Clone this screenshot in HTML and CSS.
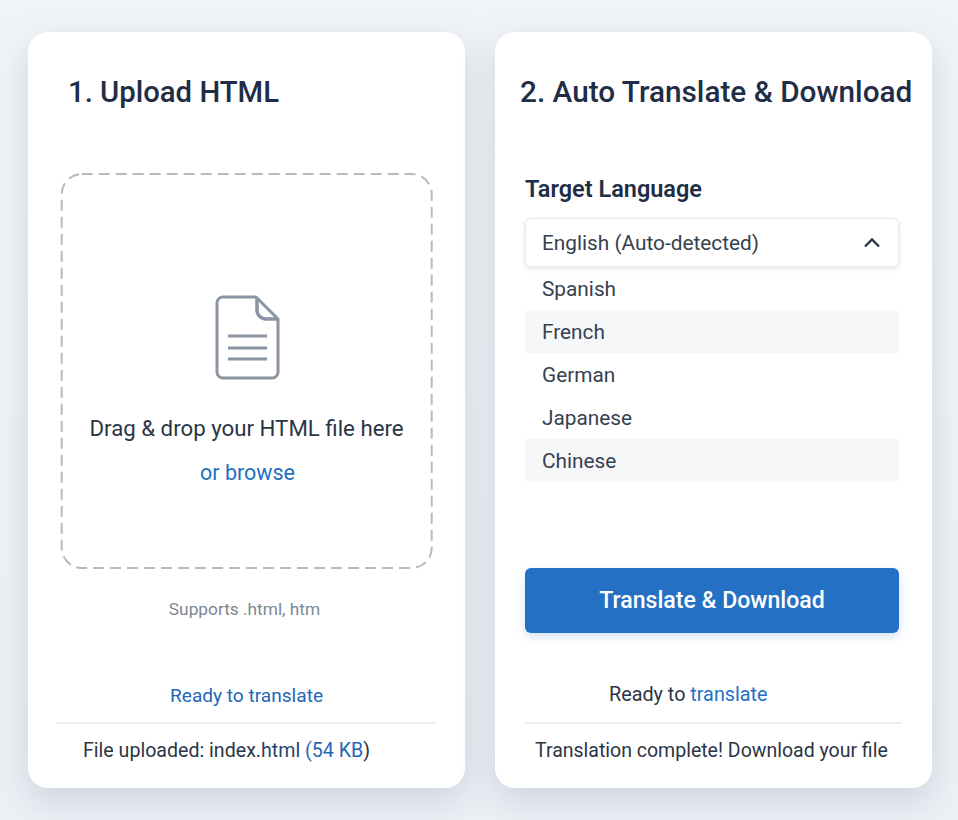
FILE: index.html
```html
<!DOCTYPE html>
<html lang="en">
<head>
<meta charset="utf-8">
<title>HTML Translator</title>
<link rel="stylesheet" href="styles.css">
</head>
<body>
<main class="page">
  <section class="card card-upload">
    <h2 class="title title-upload">1. Upload HTML</h2>
    <div class="drop">
      <svg class="drop-border" width="373" height="398" viewBox="0 0 373 398" aria-hidden="true"><rect x="1.700" y="2" width="370" height="394" rx="20" fill="none" stroke="#b0bcc6" stroke-width="2" stroke-dasharray="11 6"/></svg>
      <svg class="doc" width="66" height="86" viewBox="0 0 66 86" aria-hidden="true"><path d="M9 2H42L64 24V77a6 6 0 0 1-6 6H9a6 6 0 0 1-6-6V8a6 6 0 0 1 6-6Z" fill="none" stroke="#8a94a2" stroke-width="3" stroke-linejoin="round"/><path d="M43 3V15a9 9 0 0 0 9 9H63" fill="none" stroke="#8a94a2" stroke-width="3.500" stroke-linejoin="round"/><path d="M14 41H53M14 53H53M14 64H53" fill="none" stroke="#8a94a2" stroke-width="3"/></svg>
      <p class="drop-text">Drag &amp; drop your HTML file here</p>
      <p class="drop-link">or browse</p>
    </div>
    <p class="hint">Supports .html, htm</p>
    <p class="status status-upload">Ready to translate</p>
    <div class="rule rule-upload"></div>
    <p class="foot foot-upload">File uploaded: index.<span class="navy">html</span> <span class="blue-end">(54 KB</span>)</p>
  </section>
  <section class="card card-translate">
    <h2 class="title title-translate">2. Auto Translate &amp; Download</h2>
    <div class="panel">
      <h3 class="label">Target Language</h3>
      <div class="select">
        <span>English (Auto-detected)</span>
        <svg class="chev" width="18" height="11" viewBox="0 0 18 11" aria-hidden="true"><path d="M2 9.500L9 2.500L16 9.500" fill="none" stroke="#2b3748" stroke-width="2.400"/></svg>
      </div>
      <ul class="options">
        <li class="opt">Spanish</li>
        <li class="opt opt-shade">French</li>
        <li class="opt">German</li>
        <li class="opt">Japanese</li>
        <li class="opt opt-shade">Chinese</li>
      </ul>
      <button class="btn" type="button">Translate &amp; Download</button>
    </div>
    <p class="status status-translate">Ready to <span class="blue">translate</span></p>
    <div class="rule rule-translate"></div>
    <p class="foot foot-translate">Translation complete! Download your file</p>
  </section>
</main>
</body>
</html>
```
FILE: styles.css
```css
* { box-sizing: border-box; margin: 0; padding: 0; }
html, body { height: 100%; }
body {
  background: linear-gradient(180deg, #f1f4f7 0%, #edf0f5 100%);
  font-family: Roboto, "Liberation Sans", sans-serif;
  color: #2b3545;
  overflow: hidden;
}
.page {
  display: flex;
  gap: 30px;
  padding: 32px 26px 32px 28px;
  height: 820px;
}
.card {
  width: 437px;
  height: 756px;
  background: #fff;
  border-radius: 20px;
  box-shadow: 0 12px 34px rgba(110, 125, 150, 0.25);
  display: flex;
  flex-direction: column;
}
.title {
  font-weight: 500;
  line-height: 36px;
  color: #1f2d47;
  margin-top: 42px;
}
.title-upload { font-size: 29.300px; margin-left: 40px; }
.title-translate { font-size: 29.750px; margin-left: 25px; white-space: nowrap; }

.drop {
  position: relative;
  width: 373px;
  height: 398px;
  margin: 62px 0 0 32px;
  display: flex;
  flex-direction: column;
  align-items: center;
}
.drop-border { position: absolute; left: 0; top: 0; }
.doc { margin-top: 123px; margin-left: 1px; }
.drop-text { font-size: 22.250px; line-height: 28px; margin-top: 33px; color: #2b3545; }
.drop-link { font-size: 21.500px; line-height: 28px; margin: 17px 0 0 2px; color: #2270c4; }
.hint { font-size: 17.300px; line-height: 22px; color: #7c8794; text-align: center; margin: 28px 0 0 -4px; }
.status { line-height: 24px; }
.status-upload { font-size: 19.100px; color: #2468b4; text-align: center; margin-top: 64px; }
.status-translate { font-size: 19.800px; margin: 50px 0 0 114px; }
.rule { height: 2px; background: #eceff2; }
.rule-upload { margin: 14px 29px 0 29px; }
.rule-translate { margin: 15px 30px 0 30px; }
.foot { font-size: 19.600px; line-height: 24px; margin-top: 15px; }
.foot-upload { margin-left: 55px; }
.foot-translate { font-size: 19.500px; margin-left: 40px; white-space: nowrap; }
.blue { color: #2270c4; }
.blue-end { color: #2468b4; }
.navy { color: #24466e; }

.panel { margin: 65px 33px 0 30px; }
.label { font-size: 23.500px; font-weight: 600; line-height: 28px; color: #1f2d47; }
.select {
  height: 49px;
  margin-top: 15px;
  background: #fff;
  border: 1px solid #e6eaef;
  border-radius: 6px;
  box-shadow: 0 2px 5px rgba(120, 135, 160, 0.2);
  padding: 0 17px 0 16px;
  display: flex;
  align-items: center;
  justify-content: space-between;
  font-size: 20.800px;
  color: #364150;
}
.options { list-style: none; margin-bottom: 86px; }
.opt {
  height: 43px;
  padding-left: 17px;
  display: flex;
  align-items: center;
  font-size: 20.800px;
  color: #364150;
}
.opt-shade { background: #f6f7f9; border-radius: 3px; }
.btn {
  display: block;
  width: 100%;
  height: 65px;
  border: 0;
  border-radius: 6px;
  background: #2470c4;
  color: #fff;
  font: 500 23.100px Roboto, "Liberation Sans", sans-serif;
  box-shadow: 0 4px 10px rgba(36, 112, 196, 0.2);
}
```
